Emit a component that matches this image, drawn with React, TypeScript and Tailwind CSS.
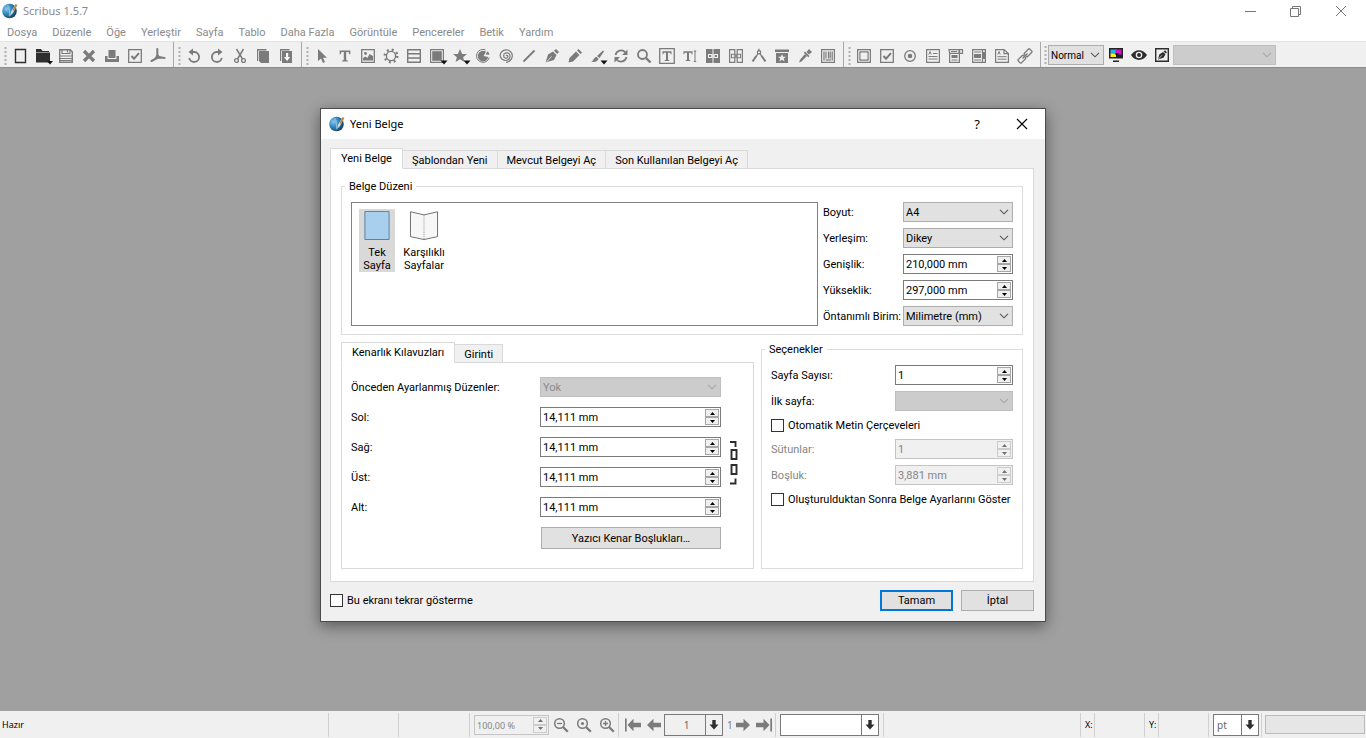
import type { ReactNode } from "react";
import { clsx } from "clsx";

/* 16x16 toolbar drawings, currentColor is set by the button */
const icons: Record<string, ReactNode> = {
  newDoc: <path d="M3.500 1.500h10v13h-10z" fill="none" stroke="currentColor" strokeWidth="1.400" />,
  open: (
    <>
      <path d="M1 1h5l1.500 2H14v1H1zM1 4.500h14v10H1z" fill="currentColor" />
      <path d="M12 13h6l-3 3.500z" fill="#111" />
    </>
  ),
  save: (
    <>
      <path d="M1.700 1.700h10.500l2.100 2v10.600H1.700z" fill="none" stroke="currentColor" strokeWidth="1.400" />
      <path d="M4 1.500v4h8v-4M9.500 2v2.500M2 8h12M2 10.500h12M2 12.500h12" fill="none" stroke="currentColor" strokeWidth="1.200" />
    </>
  ),
  close: <path d="M3 3l10 10M13 3L3 13" stroke="currentColor" strokeWidth="3.200" />,
  print: (
    <>
      <path d="M4.500 2h7v8h-7z" fill="currentColor" />
      <path d="M1 8h2.500v3h9V8H15v6H1z" fill="currentColor" />
    </>
  ),
  check: (
    <>
      <path d="M1.700 1.700h12.600v12.600H1.700z" fill="none" stroke="currentColor" strokeWidth="1.300" />
      <path d="M4.500 8l2.500 2.700L12 5.200" fill="none" stroke="currentColor" strokeWidth="2" />
    </>
  ),
  pdf: (
    <path d="M7.300 1v5.500c0 3-2.300 5-5.800 6.500l5-2.700c2.500-1 5-1.200 8-.3M7.300 6.500c.7 2 2.500 3.200 4.500 3.300" fill="none" stroke="currentColor" strokeWidth="2" strokeLinejoin="round" strokeLinecap="round" />
  ),
  undo: (
    <>
      <path d="M6 4h2.500a5 5 0 1 1-5.300 6" fill="none" stroke="currentColor" strokeWidth="1.800" />
      <path d="M7 .500v7L2.500 4z" fill="currentColor" />
    </>
  ),
  redo: (
    <>
      <path d="M10 4H7.500a5 5 0 1 0 5.300 6" fill="none" stroke="currentColor" strokeWidth="1.800" />
      <path d="M9 .500v7L13.500 4z" fill="currentColor" />
    </>
  ),
  cut: (
    <>
      <path d="M4.500 1l6 10M11.500 1l-6 10" stroke="currentColor" strokeWidth="1.500" />
      <circle cx="4.500" cy="12.500" r="1.900" fill="none" stroke="currentColor" strokeWidth="1.300" />
      <circle cx="11.500" cy="12.500" r="1.900" fill="none" stroke="currentColor" strokeWidth="1.300" />
    </>
  ),
  copy: (
    <>
      <path d="M2 1h9.500v1.500H3.200V13H2z" fill="currentColor" />
      <path d="M4 3h10v12H6l-2-2z" fill="currentColor" />
    </>
  ),
  paste: (
    <>
      <path d="M2 1h9.500v1.500H3.200V13H2z" fill="currentColor" />
      <path d="M4 3h10v12H4z" fill="currentColor" />
      <path d="M8 5h2.200v4h2L9.100 13 6 9h2z" fill="#fff" />
    </>
  ),
  arrow: <path d="M4 1v12l3-2.500L9 15l2-1-2-4.300h4z" fill="currentColor" />,
  text: <path d="M2.700 2.500h10.600v3.700h-1L11.500 3.900H9.200v8.200l1.600.5v.900H5.200v-.9l1.600-.5V3.900H4.500l-.8 2.300h-1z" fill="currentColor" />,
  image: (
    <>
      <path d="M1.700 1.700h12.600v12.600H1.700z" fill="none" stroke="currentColor" strokeWidth="1.300" />
      <circle cx="5.500" cy="5.500" r="1.400" fill="currentColor" />
      <path d="M3 12.500V10l2.500-1.500L7.500 10 9.500 6l3.500 2v4.500z" fill="currentColor" />
    </>
  ),
  gear: (
    <>
      <circle cx="8" cy="8" r="4.600" fill="none" stroke="currentColor" strokeWidth="1.400" />
      <circle cx="8" cy="8" r="6.300" fill="none" stroke="currentColor" strokeWidth="2.400" strokeDasharray="1.900 3.048" />
    </>
  ),
  table: (
    <path d="M1.700 1.700h12.600v12.600H1.700zM1.700 5.800h12.600M1.700 10h12.600" fill="none" stroke="currentColor" strokeWidth="1.400" />
  ),
  shape: (
    <>
      <path d="M1.600 1.600h12.800v12.800H1.600z" fill="none" stroke="currentColor" strokeWidth="1.200" />
      <path d="M3.200 3.200h9.600v9.600H3.200z" fill="currentColor" />
      <path d="M11.500 12.500h7l-3.500 4z" fill="#111" />
    </>
  ),
  star: (
    <>
      <path d="M8 1l2.100 5H15l-3.900 3.200L12.500 14 8 11.300 3.500 14l1.400-4.800L1 6h4.900z" fill="currentColor" />
      <path d="M11.500 12.500h7l-3.500 4z" fill="#111" />
    </>
  ),
  arc: (
    <>
      <path d="M8.500 8L11 3.700A5.300 5.300 0 1 0 13.300 9z" fill="currentColor" />
      <path d="M10.500 1.900A6.500 6.500 0 1 0 14.300 9.500" fill="none" stroke="currentColor" strokeWidth="1" />
      <path d="M10.500 6.500l2-3.300a6 6 0 0 1 2 3.600z" fill="currentColor" />
    </>
  ),
  spiral: (
    <path d="M8 8c1-1.500 2.500 0 1.600 1.300-1.300 1.700-4 .700-4-1.500 0-3 4-4 5.700-1.800 2 3-.3 6.600-3.600 6.500C2.500 12.300.800 7 3.500 4c3-3.500 9-2.500 10.500 1.800 1.200 4-1.500 8.200-6 8.500" fill="none" stroke="currentColor" strokeWidth="1.200" />
  ),
  line: <path d="M2.500 13.500l11-11" stroke="currentColor" strokeWidth="1.800" />,
  pen: (
    <>
      <path d="M1.500 14.500l2.500-8L9 3.500l3.500 3.500-2.500 5z" fill="currentColor" />
      <path d="M10 2.800L12 1l3 3-1.700 2z" fill="currentColor" />
      <path d="M2 14.500L7.500 8.500" stroke="#f0f0f0" strokeWidth=".8" />
    </>
  ),
  pencil: <path d="M1.500 14.500l1-4.500L9 3.500 12.500 7 6 13.500zM10 2.500l1.500-1.500L15 4.500 13.500 6z" fill="currentColor" />,
  brush: (
    <>
      <path d="M13 2.500l1 1L9.500 10 7 8z" fill="currentColor" />
      <path d="M1 13.500c3-.5 2.500-4 5.300-4.700l2.200 2C8 13.500 4.500 14.500 1 13.500z" fill="currentColor" />
      <path d="M10.500 12.500h7L14 16.500z" fill="#111" />
    </>
  ),
  rotate: (
    <>
      <path d="M2.500 7a5.700 5.700 0 0 1 10-2.500M13.500 9a5.700 5.700 0 0 1-10 2.500" fill="none" stroke="currentColor" strokeWidth="1.700" />
      <path d="M14.500 1.500V7H9zM1.500 14.500V9H7z" fill="currentColor" />
    </>
  ),
  zoom: (
    <>
      <circle cx="6.500" cy="6.500" r="4.500" fill="none" stroke="currentColor" strokeWidth="1.800" />
      <path d="M10 10l4.500 4.500" stroke="currentColor" strokeWidth="2.400" />
    </>
  ),
  textFrame: (
    <>
      <path d="M.700.700h14.600v14.600H.700z" fill="none" stroke="currentColor" strokeWidth="1.300" />
      <path d="M3.500 3.300h9v3h-.8L11.200 4.700H9v7.100l1.300.4v.700H5.700v-.7l1.300-.4V4.700H4.800l-.5 1.600h-.8z" fill="currentColor" />
    </>
  ),
  textEdit: (
    <>
      <path d="M1.500 3.300h9v3h-.8L9.200 4.700H7v7.100l1.300.4v.700H3.700v-.7l1.300-.4V4.700H2.800l-.5 1.600h-.8z" fill="currentColor" />
      <path d="M13 3v10.500M11.800 3h2.400M11.800 13.500h2.400" stroke="currentColor" strokeWidth="1" />
    </>
  ),
  link: (
    <>
      <path d="M1 1h6.500v14H1zM8.500 1H15v14H8.500z" fill="currentColor" />
      <path d="M3.500 6.500h3.500v3H3.500zM9 6.500h3.500v3H9zM6 8h4" fill="none" stroke="#f0f0f0" strokeWidth="1.100" />
    </>
  ),
  unlink: (
    <>
      <path d="M1.600 1.600h5.200v12.800H1.600zM9.200 1.600h5.200v12.800H9.200z" fill="none" stroke="currentColor" strokeWidth="1.200" />
      <path d="M3.500 6.300h3.500v3.400H3.500zM9 6.300h3.500v3.400H9z" fill="#f0f0f0" stroke="currentColor" strokeWidth="1.100" />
      <path d="M6 8h4" stroke="currentColor" strokeWidth="1.100" />
    </>
  ),
  compass: (
    <>
      <circle cx="8" cy="4.200" r="1.600" fill="none" stroke="currentColor" strokeWidth="1.300" />
      <path d="M8 .800v2M7 5.700L4.800 9M9 5.700L11.200 9" stroke="currentColor" strokeWidth="1.300" />
      <path d="M5.300 8L1.500 13.500M10.700 8l3.800 5.500" stroke="currentColor" strokeWidth="2" />
    </>
  ),
  render: (
    <>
      <path d="M1 1.500h14v2.500H1zM2 5h12v10H2z" fill="currentColor" />
      <path d="M8 6l1.100 2.700H12L9.700 10.500l.9 2.900L8 11.700l-2.600 1.700.9-2.900L4 8.700h2.900z" fill="#f0f0f0" />
    </>
  ),
  dropper: (
    <>
      <path d="M9.500 4l2.500-3 3 3-3 2.500zM8 3.500l4.500 4.500-1.200 1.200L6.800 4.700z" fill="currentColor" />
      <path d="M8 6l2 2-5.500 5.500-2.500 1 1-2.800z" fill="currentColor" />
    </>
  ),
  barcode: (
    <>
      <path d="M1.600 1.600h12.800v12.800H1.600z" fill="none" stroke="currentColor" strokeWidth="1.200" />
      <path d="M4 3.500v9M6 3.500v7M8.500 3.500v7M10.200 3.500v7M12.200 3.500v9" stroke="currentColor" strokeWidth="1.200" />
      <path d="M5.500 12h5.500" stroke="currentColor" strokeWidth="1.200" />
    </>
  ),
  pushButton: (
    <path d="M1.600 1.600h12.800v12.800H1.600zM3.900 3.900h8.200v8.200H3.900z" fill="none" stroke="currentColor" strokeWidth="1.200" />
  ),
  radio: (
    <>
      <circle cx="8" cy="8" r="5.300" fill="none" stroke="currentColor" strokeWidth="1.300" />
      <circle cx="8" cy="8" r="2.300" fill="currentColor" />
    </>
  ),
  textField: (
    <>
      <path d="M1.600 1.600h12.800v12.800H1.600z" fill="none" stroke="currentColor" strokeWidth="1.200" />
      <path d="M3.800 6.500L5 3.500l1.200 3M8 5.500h4.500M3.500 8.500h9M3.500 11h9" fill="none" stroke="currentColor" strokeWidth="1" />
    </>
  ),
  comboBox: (
    <>
      <path d="M1 1.600h10.500v3.800H1.600zM1.600 5v9.400h9.800V5M11 1.600h3.500v3.800H11z" fill="none" stroke="currentColor" strokeWidth="1.200" />
      <path d="M3.500 7h6v3h-6zM3.500 11.500h6v1h-6zM3 3h6v1H3z" fill="currentColor" />
    </>
  ),
  listBox: (
    <>
      <path d="M1.600 1.600h12.800v12.800H1.600zM11.500 1.600v12.800" fill="none" stroke="currentColor" strokeWidth="1.200" />
      <path d="M3 3.500h7v1H3zM3 6h7v4H3zM3 11.500h7v1H3zM12 4h2v7h-2z" fill="currentColor" />
    </>
  ),
  annotation: (
    <>
      <path d="M1.600 1.600h8.400l4.400 4v8.800H1.600zM10 1.600v4h4.400" fill="none" stroke="currentColor" strokeWidth="1.200" />
      <path d="M3.800 6.500L5 3.500l1.200 3M3.500 8.700h9M3.500 11.200h9" fill="none" stroke="currentColor" strokeWidth="1" />
    </>
  ),
  chain: (
    <g fill="none" stroke="currentColor" strokeWidth="1.300">
      <rect x="7.500" y="2.600" width="7.500" height="4.600" rx=".8" transform="rotate(-45 11 5)" />
      <rect x="1" y="8.700" width="7.500" height="4.600" rx=".8" transform="rotate(-45 5 11)" />
      <path d="M5.500 10.500l5-5" />
    </g>
  ),
  colors: (
    <>
      <path d="M1 1h14v10.500H1zM5 13.500h6V15H5z" fill="#222" />
      <path d="M2.500 2.500h6.300v4.200H2.500z" fill="#1fb3e8" />
      <path d="M7.500 2.500h6v5h-6z" fill="#d313c9" />
      <path d="M2.500 6.500h5.500V10H2.500z" fill="#ffe924" />
      <path d="M7.500 6h3v2h-3z" fill="#111" />
    </>
  ),
  eye: (
    <>
      <path d="M0 8c4-6.500 12-6.500 16 0-4 6.500-12 6.500-16 0z" fill="currentColor" />
      <circle cx="8" cy="8" r="3.300" fill="#f0f0f0" />
      <circle cx="8" cy="8" r="2" fill="currentColor" />
    </>
  ),
  editPen: (
    <>
      <path d="M1.700 1.700h12.600v12.600H1.700z" fill="none" stroke="currentColor" strokeWidth="1.400" />
      <path d="M4 12.500L5.300 7.500 9 5l2.500 2.300-2 3.500zM9.500 4.500L11 3.300l2 2-1.200 1.300z" fill="currentColor" />
      <path d="M4 12.500l4-4.300" stroke="#f0f0f0" strokeWidth=".7" />
    </>
  ),
  zoomOut: (
    <>
      <circle cx="6.500" cy="6.500" r="4.800" fill="none" stroke="currentColor" strokeWidth="1.500" />
      <path d="M4 6.500h5" stroke="currentColor" strokeWidth="1.300" />
      <path d="M10 10l4.800 4.800" stroke="currentColor" strokeWidth="2.300" />
    </>
  ),
  zoomReset: (
    <>
      <circle cx="6.500" cy="6.500" r="4.800" fill="none" stroke="currentColor" strokeWidth="1.500" />
      <circle cx="6.500" cy="6.500" r="1.600" fill="currentColor" />
      <path d="M10 10l4.800 4.800" stroke="currentColor" strokeWidth="2.300" />
    </>
  ),
  zoomIn: (
    <>
      <circle cx="6.500" cy="6.500" r="4.800" fill="none" stroke="currentColor" strokeWidth="1.500" />
      <path d="M4 6.500h5M6.500 4v5" stroke="currentColor" strokeWidth="1.300" />
      <path d="M10 10l4.800 4.800" stroke="currentColor" strokeWidth="2.300" />
    </>
  ),
  first: <path d="M0 1.500h1.700v13H0zM2.500 8L8.500 1.800v4h7.500v4.400H8.500v4z" fill="currentColor" />,
  prev: <path d="M1 8l6.500-6.200v4H15v4.400H7.500v4z" fill="currentColor" />,
  next: <path d="M15 8L8.500 1.800v4H1v4.400h7.500v4z" fill="currentColor" />,
  last: <path d="M14.300 1.500H16v13h-1.700zM13.500 8L7.500 1.800v4H0v4.400h7.500v4z" fill="currentColor" />,
};

const Icon = ({ name }: { name: string }) => (
  <svg viewBox="0 0 16 16" className="w-4 h-4 overflow-visible" aria-hidden="true">
    {icons[name]}
  </svg>
);

const ToolButton = ({ name, dark, narrow }: { name: string; dark?: boolean; narrow?: boolean }) => (
  <button
    type="button"
    aria-label={name}
    className={clsx(
      "h-5 shrink-0 flex items-center justify-center",
      narrow ? "w-[21px]" : "w-[23px]",
      dark ? "text-[#2e2e2e]" : "text-[#7b7b7b]"
    )}
  >
    <Icon name={name} />
  </button>
);

const Handle = () => (
  <svg viewBox="0 0 4 20" className="w-1 h-5 shrink-0" aria-hidden="true">
    <path d="M1.500 1v19" stroke="#b0b0b0" strokeWidth="2" strokeDasharray="2 2" />
  </svg>
);

const ToolGroup = ({ names, dark = [] }: { names: string[]; dark?: string[] }) => (
  <div className="flex items-center h-full border-r border-[#a8a8a8] shrink-0 px-1 pt-[2px]">
    <Handle />
    {names.map((n) => (
      <ToolButton key={n} name={n} dark={dark.includes(n)} />
    ))}
  </div>
);

const Logo = () => (
  <svg viewBox="0 0 16 16" className="w-4 h-4 shrink-0" aria-hidden="true">
    <defs>
      <radialGradient id="ball" cx=".3" cy=".35" r=".8">
        <stop offset="0" stopColor="#8cc8ee" />
        <stop offset=".45" stopColor="#2f86bd" />
        <stop offset="1" stopColor="#103247" />
      </radialGradient>
    </defs>
    <circle cx="7.500" cy="8" r="7.300" fill="url(#ball)" />
    <path d="M5.500 2C7.500 4.500 7.800 9 7.300 13.500" fill="none" stroke="#9fd0ee" strokeWidth=".8" />
    <path d="M8 13l.8-4L13 2l1.500 1L11 10z" fill="#cfdcdc" />
    <path d="M10.500 7L13.500 1l2 1L12 8z" fill="#b98a4e" />
  </svg>
);

const Chevron = ({ color = "#555" }: { color?: string }) => (
  <svg viewBox="0 0 10 6" className="absolute right-1 top-1/2 -mt-[3px] w-[10px] h-[6px] pointer-events-none" aria-hidden="true">
    <path d="M1 .800l4 4 4-4" fill="none" stroke={color} strokeWidth="1.100" />
  </svg>
);

const Select = ({ id, value, disabled, label }: { id?: string; value: string; disabled?: boolean; label?: string }) => (
  <div className="relative w-full">
    <select
      id={id}
      aria-label={label}
      disabled={disabled}
      className={clsx(
        "appearance-none block w-full h-5 pl-[2px] pr-4 pt-px border rounded-none opacity-100",
        disabled ? "bg-[#cccccc] border-[#bfbfbf] text-[#8a8a8a]" : "bg-[#e1e1e1] border-[#adadad]"
      )}
    >
      <option>{value}</option>
    </select>
    <Chevron color={disabled ? "#a8a8a8" : "#555"} />
  </div>
);

const Triangle = ({ down, color }: { down?: boolean; color: string }) => (
  <svg viewBox="0 0 5 3" className="w-[5px] h-[3px]" aria-hidden="true">
    <path d={down ? "M0 0h5L2.500 3z" : "M0 3h5L2.500 0z"} fill={color} />
  </svg>
);

const SpinBox = ({ id, value, disabled, label }: { id?: string; value: string; disabled?: boolean; label?: string }) => {
  const btn = clsx(
    "w-[14px] h-2 flex items-center justify-center border",
    disabled ? "border-[#cccccc] bg-[#f0f0f0]" : "border-[#a6a6a6] bg-[#f0f0f0]"
  );
  const color = disabled ? "#707070" : "#000";
  return (
    <div
      className={clsx(
        "flex items-center w-full h-5 border pr-px",
        disabled ? "bg-[#f0f0f0] border-[#c4c4c4] text-[#858585]" : "bg-white border-[#7a7a7a]"
      )}
    >
      <input id={id} aria-label={label} type="text" defaultValue={value} disabled={disabled} className="flex-1 min-w-0 h-full pl-[2px] pt-px" />
      <div className="flex flex-col">
        <button type="button" aria-label="+" disabled={disabled} className={btn}>
          <Triangle color={color} />
        </button>
        <button type="button" aria-label="-" disabled={disabled} className={btn}>
          <Triangle down color={color} />
        </button>
      </div>
    </div>
  );
};

const Check = ({ label }: { label: string }) => (
  <label className="flex items-center gap-1 h-[14px]">
    <input type="checkbox" className="appearance-none w-[13px] h-[13px] border border-[#333] bg-white shrink-0" />
    <span className="pt-px">{label}</span>
  </label>
);

type Field = { id: string; label: string; value: string; kind: "select" | "spin"; disabled?: boolean };

const sizeFields: Field[] = [
  { id: "boyut", label: "Boyut:", value: "A4", kind: "select" },
  { id: "yerlesim", label: "Yerleşim:", value: "Dikey", kind: "select" },
  { id: "genislik", label: "Genişlik:", value: "210,000 mm", kind: "spin" },
  { id: "yukseklik", label: "Yükseklik:", value: "297,000 mm", kind: "spin" },
  { id: "birim", label: "Öntanımlı Birim:", value: "Milimetre (mm)", kind: "select" },
];

const marginFields: Field[] = [
  { id: "duzenler", label: "Önceden Ayarlanmış Düzenler:", value: "Yok", kind: "select", disabled: true },
  { id: "sol", label: "Sol:", value: "14,111 mm", kind: "spin" },
  { id: "sag", label: "Sağ:", value: "14,111 mm", kind: "spin" },
  { id: "ust", label: "Üst:", value: "14,111 mm", kind: "spin" },
  { id: "alt", label: "Alt:", value: "14,111 mm", kind: "spin" },
];

const FieldRow = ({ field, width }: { field: Field; width: string }) => (
  <div className={clsx("flex items-center justify-between", field.disabled && field.kind === "spin" && "text-[#858585]")}>
    <label htmlFor={field.id} className="whitespace-nowrap pt-[2px]">
      {field.label}
    </label>
    <div className={clsx("shrink-0", width)}>
      {field.kind === "select" ? <Select {...field} label={undefined} /> : <SpinBox {...field} label={undefined} />}
    </div>
  </div>
);

const Tabs = ({ names }: { names: string[] }) => (
  <div role="tablist" className="flex items-end relative z-10 -mb-px">
    {names.map((n, i) => (
      <button
        key={n}
        type="button"
        role="tab"
        aria-selected={i === 0}
        className={clsx(
          "border border-[#d9d9d9] whitespace-nowrap",
          i === 0 ? "h-[21px] px-[10px] pt-px bg-white border-b-white" : "h-[19px] px-[9px] pt-[2px] bg-[#f0f0f0] border-l-0"
        )}
      >
        {n}
      </button>
    ))}
  </div>
);

const PageLayouts = () => (
  <div className="flex-1 h-[124px] border border-[#828282] bg-white flex items-start gap-2 px-[7px] py-[6px] leading-[13px] text-center">
    <button type="button" className="bg-[#d9d9d9] w-9 h-[63px] flex flex-col items-center pt-[2px]">
      <svg viewBox="0 0 26 30" className="w-[26px] h-[30px] mb-[6px]" aria-hidden="true">
        <path d="M.500.500h25v29H.500z" fill="#a9cfee" stroke="#587f9c" />
      </svg>
      Tek
      <br />
      Sayfa
    </button>
    <button type="button" className="w-[42px] h-[63px] flex flex-col items-center pt-[2px]">
      <svg viewBox="0 0 30 30" className="w-[30px] h-[30px] mb-[6px]" aria-hidden="true">
        <path d="M1 .800L15 4 29 .800V26.500L15 29.500 1 26.500z" fill="#f7f7f7" stroke="#6e6e6e" />
        <path d="M15 4v25" stroke="#8a8a8a" strokeDasharray="1 1" />
      </svg>
      Karşılıklı
      <br />
      Sayfalar
    </button>
  </div>
);

const NewDocumentDialog = () => (
  <section
    role="dialog"
    aria-label="Yeni Belge"
    className="w-[726px] max-w-full border border-[#4b4b4b] bg-[#f0f0f0] text-black shadow-[0_4px_14px_rgba(0,0,0,0.45)]"
  >
    <header className="h-[30px] bg-white flex items-center pl-2 pr-[17px] [font-family:'Noto_Sans',sans-serif] text-[11px]">
      <Logo />
      <h1 className="ml-[5px] flex-1">Yeni Belge</h1>
      <button type="button" className="w-4 mr-[31px] text-[13px]">
        ?
      </button>
      <button type="button" aria-label="Kapat">
        <svg viewBox="0 0 12 12" className="w-3 h-3">
          <path d="M1 1l10 10M11 1L1 11" stroke="#000" strokeWidth="1.100" />
        </svg>
      </button>
    </header>

    <div className="pl-[9px] pr-[11px] pt-[9px] pb-[10px]">
      <Tabs names={["Yeni Belge", "Şablondan Yeni", "Mevcut Belgeyi Aç", "Son Kullanılan Belgeyi Aç"]} />

      <div className="bg-white border border-[#d9d9d9] px-[10px] pt-[10px] pb-3">
        <fieldset className="border border-[#dcdcdc] px-[9px] pb-2">
          <legend className="-ml-[6px] px-1 leading-[15px]">Belge Düzeni</legend>
          <div className="flex gap-[5px] pt-2">
            <PageLayouts />
            <div className="w-[190px] flex flex-col gap-[6px]">
              {sizeFields.map((f) => (
                <FieldRow key={f.id} field={f} width="w-[110px]" />
              ))}
            </div>
          </div>
        </fieldset>

        <div className="flex items-stretch gap-[7px] mt-[7px]">
          <div className="flex-1 flex flex-col">
            <Tabs names={["Kenarlık Kılavuzları", "Girinti"]} />
            <div className="flex-1 border border-[#d9d9d9] pl-[9px] pr-[14px] pt-[14px] flex items-start gap-[9px]">
              <div className="flex-1 flex flex-col gap-[10px]">
                {marginFields.map((f) => (
                  <FieldRow key={f.id} field={f} width="w-[181px]" />
                ))}
                <button type="button" className="self-end w-[180px] h-[22px] border border-[#adadad] bg-[#e1e1e1] pt-px">
                  Yazıcı Kenar Boşlukları…
                </button>
              </div>
              <button type="button" aria-label="Kenarları bağla" className="mt-16">
                <svg viewBox="0 0 9 44" className="w-[9px] h-11">
                  <path d="M0 1h5.500v5M1.500 9h5v9h-5zM1.500 24h5v9h-5zM0 42.500h5.500v-5" fill="none" stroke="#2c2c2c" strokeWidth="1.900" />
                </svg>
              </button>
            </div>
          </div>

          <fieldset className="w-[262px] h-[227px] border border-[#dcdcdc] px-[9px]">
            <legend className="-ml-[6px] px-1 leading-[15px]">Seçenekler</legend>
            <div className="flex flex-col gap-[7px] pt-2">
              <div className="flex flex-col gap-[6px]">
                <FieldRow field={{ id: "sayfa", label: "Sayfa Sayısı:", value: "1", kind: "spin" }} width="w-[118px]" />
                <FieldRow field={{ id: "ilk", label: "İlk sayfa:", value: "", kind: "select", disabled: true }} width="w-[118px]" />
              </div>
              <Check label="Otomatik Metin Çerçeveleri" />
              <div className="flex flex-col gap-[6px]">
                <FieldRow field={{ id: "sutun", label: "Sütunlar:", value: "1", kind: "spin", disabled: true }} width="w-[118px]" />
                <FieldRow field={{ id: "bosluk", label: "Boşluk:", value: "3,881 mm", kind: "spin", disabled: true }} width="w-[118px]" />
              </div>
              <Check label="Oluşturulduktan Sonra Belge Ayarlarını Göster" />
            </div>
          </fieldset>
        </div>
      </div>

      <footer className="flex items-center gap-2 pt-2">
        <div className="flex-1">
          <Check label="Bu ekranı tekrar gösterme" />
        </div>
        <button type="button" className="w-[73px] h-[21px] border-2 border-[#0078d7] bg-[#e1e1e1]">
          Tamam
        </button>
        <button type="button" className="w-[73px] h-[21px] border border-[#adadad] bg-[#e1e1e1]">
          İptal
        </button>
      </footer>
    </div>
  </section>
);

const menus = ["Dosya", "Düzenle", "Öğe", "Yerleştir", "Sayfa", "Tablo", "Daha Fazla", "Görüntüle", "Pencereler", "Betik", "Yardım"];

const Divider = () => <span className="w-px h-6 bg-[#d0d0d0] shrink-0" />;

const DropArrow = () => (
  <span className="absolute right-0 inset-y-0 w-[17px] border-l border-[#7a7a7a] flex items-center justify-center pointer-events-none">
    <svg viewBox="0 0 10 10" className="w-[10px] h-[10px]" aria-hidden="true">
      <path d="M3.300 0h3.400v4.500H9.500L5 9.500.500 4.500h2.800z" fill="#2e2e2e" />
    </svg>
  </span>
);

const ArrowSelect = ({ value, label, width, align }: { value: string; label: string; width: string; align?: string }) => (
  <div className={clsx("relative shrink-0 h-[22px] border border-[#7a7a7a] bg-white text-[#666]", width)}>
    <select aria-label={label} className={clsx("appearance-none block w-full h-full pl-[3px] pr-[17px]", align)}>
      <option>{value}</option>
    </select>
    <DropArrow />
  </div>
);

const StatusBar = () => (
  <footer className="h-[27px] shrink-0 bg-[#f0f0f0] flex items-center text-[10px] [font-family:'Noto_Sans',sans-serif]">
    <span className="w-[328px] pl-[2px] text-[9px]">Hazır</span>
    <Divider />
    <span className="w-[69px] shrink-0" />
    <Divider />
    <span className="w-[70px] shrink-0" />
    <Divider />
    <div className="w-[75px] shrink-0 ml-1 text-[9px]">
      <SpinBox value="100,00 %" label="Yakınlaştırma" disabled />
    </div>
    <div className="flex">
      <ToolButton name="zoomOut" />
      <ToolButton name="zoomReset" />
      <ToolButton name="zoomIn" />
    </div>
    <Divider />
    <div className="flex items-center ml-[3px]">
      <ToolButton name="first" narrow />
      <ToolButton name="prev" narrow />
      <ArrowSelect value="1" label="Sayfa" width="w-[59px]" align="bg-[#f0f0f0] text-center" />
      <span className="ml-1 text-[#7b7b7b]">1</span>
      <ToolButton name="next" narrow />
      <ToolButton name="last" narrow />
    </div>
    <Divider />
    <div className="mx-1">
      <ArrowSelect value="" label="Katman" width="w-[99px]" />
    </div>
    <Divider />
    <span className="flex-1" />
    <Divider />
    <span className="w-[13px] pl-1 text-[9px]">X:</span>
    <Divider />
    <span className="w-[49px] shrink-0" />
    <Divider />
    <span className="w-[13px] pl-1 text-[9px]">Y:</span>
    <Divider />
    <span className="w-[49px] shrink-0" />
    <Divider />
    <div className="ml-1 mr-[2px]">
      <ArrowSelect value="pt" label="Birim" width="w-[46px]" />
    </div>
    <Divider />
    <span className="w-[100px] h-[19px] ml-[3px] mr-px border border-[#bcbcbc] bg-[#e6e6e6] shrink-0" />
  </footer>
);

export default function App() {
  return (
    <div className="h-screen flex flex-col overflow-hidden bg-[#a0a0a0] text-black text-[11px] leading-[14px] [font-family:Roboto,'Liberation_Sans',sans-serif]">
      <header className="h-[22px] shrink-0 bg-white flex items-center pl-[2px] pr-[19px] text-[#8a8a8a] text-[11px] [font-family:'Noto_Sans',sans-serif]">
        <Logo />
        <span className="ml-[5px] flex-1">Scribus 1.5.7</span>
        <div className="flex gap-[33px]">
          {["M0 6.500h11", "M.500 3.500h8v8h-8zM2.500 3.500v-2h8v8h-2", "M1 1l10 10M11 1L1 11"].map((d, i) => (
            <button key={d} type="button" aria-label={["Simge", "Geri Yükle", "Kapat"][i]}>
              <svg viewBox="0 0 12 12" className="w-3 h-3">
                <path d={d} fill="none" stroke="#777" />
              </svg>
            </button>
          ))}
        </div>
      </header>

      <nav className="h-5 shrink-0 bg-white border-b border-[#e4e4e4] flex items-center gap-[15px] pl-[7px] pt-[3px] text-[#8a8a8a]">
        {menus.map((m) => (
          <button key={m} type="button">
            {m}
          </button>
        ))}
      </nav>

      <div className="h-[26px] shrink-0 bg-[#f0f0f0] border-b border-[#8c8c8c] flex items-center">
        <ToolGroup names={["newDoc", "open", "save", "close", "print", "check", "pdf"]} dark={["newDoc", "open"]} />
        <ToolGroup names={["undo", "redo", "cut", "copy", "paste"]} />
        <ToolGroup
          names={[
            "arrow", "text", "image", "gear", "table", "shape", "star", "arc", "spiral", "line", "pen", "pencil",
            "brush", "rotate", "zoom", "textFrame", "textEdit", "link", "unlink", "compass", "render", "dropper", "barcode",
          ]}
        />
        <ToolGroup names={["pushButton", "check", "radio", "textField", "comboBox", "listBox", "annotation", "chain"]} />
        <div className="flex items-center pl-[3px] pt-px">
          <Handle />
          <div className="w-14 text-[10px]">
            <Select value="Normal" label="Görünüm" />
          </div>
          <ToolButton name="colors" dark />
          <ToolButton name="eye" dark />
          <ToolButton name="editPen" dark />
          <div className="w-[103px]">
            <Select value="" label="Görme" disabled />
          </div>
        </div>
      </div>

      <main className="flex-1 min-h-0 flex items-start justify-center pt-10">
        <NewDocumentDialog />
      </main>

      <StatusBar />
    </div>
  );
}
